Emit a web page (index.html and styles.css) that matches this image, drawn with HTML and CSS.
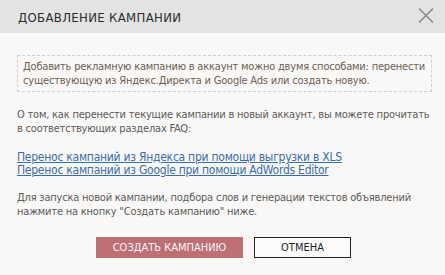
FILE: index.html
```html
<!DOCTYPE html>
<html lang="ru">
<head>
    <meta charset="UTF-8">
    <title>Добавление кампании</title>
    <link rel="stylesheet" href="styles.css">
</head>
<body>
    <div class="dialog">
        <div class="dialog-header">
            <div class="dialog-title">ДОБАВЛЕНИЕ КАМПАНИИ</div>
            <span class="dialog-close">
                <svg width="16" height="17" viewBox="0 0 16 17">
                    <path d="M1 1.5 L15 15.5 M15 1.5 L1 15.5" stroke="#8a8a8a" stroke-width="1.6" fill="none"/>
                </svg>
            </span>
        </div>
        <div class="dialog-body">
            <div class="note">
                Добавить рекламную кампанию в аккаунт можно двумя способами: перенести
                существующую из Яндекс.Директа и Google Ads или создать новую.
            </div>
            <p class="text">
                О том, как перенести текущие кампании в новый аккаунт, вы можете прочитать
                в соответствующих разделах FAQ:
            </p>
            <div class="links">
                <a href="#">Перенос кампаний из Яндекса при помощи выгрузки в XLS</a>
                <a href="#">Перенос кампаний из Google при помощи AdWords Editor</a>
            </div>
            <p class="text">
                Для запуска новой кампании, подбора слов и генерации текстов объявлений
                нажмите на кнопку "Создать кампанию" ниже.
            </p>
            <div class="buttons">
                <button class="btn btn-create">СОЗДАТЬ КАМПАНИЮ</button>
                <button class="btn btn-cancel">ОТМЕНА</button>
            </div>
        </div>
    </div>
</body>
</html>
```

FILE: styles.css
```css
body {
    margin: 0;
    font-family: "DejaVu Sans Condensed", "DejaVu Sans", sans-serif;
    background-color: #f9f8f7;
}
.dialog {
    width: 445px;
    height: 275px;
    background-color: #f9f8f7;
}
.dialog-header {
    height: 33px;
    background-color: #e3e3e3;
    display: flex;
    align-items: center;
    justify-content: space-between;
    padding: 0 11px 0 18px;
}
.dialog-title {
    font-size: 13px;
    letter-spacing: 0.35px;
    color: #2b2b2b;
    padding-top: 1px;
}
.dialog-close {
    display: flex;
    margin-top: -2px;
}
.dialog-body {
    padding: 22px 13px 0 17px;
}
.note {
    border: 1px dashed #cfcfcf;
    padding: 4px 5px 3px;
    font-size: 11px;
    line-height: 14px;
    letter-spacing: -0.2px;
    color: #6b5f55;
}
.text {
    margin: 0;
    font-size: 11px;
    line-height: 14px;
    letter-spacing: -0.2px;
    color: #5b5b5b;
}
.note + .text {
    margin-top: 16px;
}
.links {
    display: flex;
    flex-direction: column;
    margin: 15px 0 14px;
    font-size: 12px;
    line-height: 13px;
    letter-spacing: -0.25px;
}
.links a {
    color: #3a6da8;
}
.buttons {
    display: flex;
    justify-content: center;
    gap: 11px;
    margin-top: 18px;
    padding-right: 2px;
}
.btn {
    height: 21px;
    font-family: "DejaVu Sans Condensed", "DejaVu Sans", sans-serif;
    font-size: 11px;
    padding: 0;
    cursor: pointer;
}
.btn-create {
    width: 147px;
    background-color: #bc7073;
    color: #fbf3f3;
    border: none;
}
.btn-cancel {
    width: 97px;
    background-color: #fbfbfb;
    color: #222;
    border: 1px solid #222;
}
```
